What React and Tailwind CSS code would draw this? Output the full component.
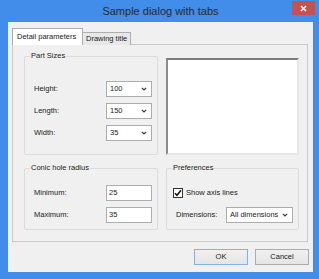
import { useState } from 'react'

function Chevron() {
  return (
    <svg width="6" height="4" viewBox="0 0 6 4" className="shrink-0">
      <path d="M0.8 0.8 L3 3 L5.2 0.8" fill="none" stroke="#3a3a3a" strokeWidth="1.2" />
    </svg>
  )
}

function Combo({ value, className }) {
  return (
    <div className={`flex h-[16px] items-center justify-between border border-[#acacac] bg-white pl-[3px] pr-[4px] ${className}`}>
      <span>{value}</span>
      <Chevron />
    </div>
  )
}

function Group({ title, className, children }) {
  return (
    <div className={`relative rounded-[2px] border border-[#dcdcdc] ${className}`}>
      <span className="absolute left-[5px] top-[-6px] bg-[#f0f0f0] px-[1px] leading-[10px]">{title}</span>
      {children}
    </div>
  )
}

function Row({ label, children }) {
  return (
    <div className="flex h-[16px] items-center justify-between">
      <span>{label}</span>
      {children}
    </div>
  )
}

export default function App() {
  const [showAxis, setShowAxis] = useState(true)

  return (
    <div className="flex h-[279px] w-[319px] flex-col bg-[#428cea] pb-[7px] pl-[8px] pr-[6px] font-['Liberation_Sans',Arial,sans-serif] text-[7.5px] text-[#1a1a1a]">
      {/* Title bar */}
      <div className="relative flex h-[22px] shrink-0 items-center justify-center">
        <span className="text-[11px] text-[#2a2a2a]">Sample dialog with tabs</span>
        <div className="absolute right-[-2px] top-[1px] flex h-[14px] w-[23px] items-center justify-center bg-[#c75050]">
          <svg width="7" height="7" viewBox="0 0 7 7">
            <path d="M1 1 L6 6 M6 1 L1 6" stroke="white" strokeWidth="1.6" />
          </svg>
        </div>
      </div>

      {/* Client area */}
      <div className="flex h-[250px] flex-col bg-[#f0f0f0] pl-[4px] pr-[4px] pt-[6px]">
        {/* Tabs */}
        <div className="relative z-10 -mb-px flex items-end">
          <div className="flex h-[17px] w-[71px] items-center border border-b-0 border-[#adadad] bg-white pl-[4px]">
            Detail parameters
          </div>
          <div className="flex h-[13px] w-[48px] items-center border border-b-0 border-l-0 border-[#adadad] bg-[#e8e8e8] pl-[3px]">
            Drawing title
          </div>
        </div>

        {/* Panel */}
        <div className="mr-px flex h-[198px] flex-col border border-[#c9c9c9] bg-[#f0f0f0] pl-[11px] pr-[8px] pt-[11px]">
          <div className="flex gap-[8px]">
            <Group title="Part Sizes" className="h-[99px] w-[134px]">
              <div className="flex flex-col gap-[6px] pl-[9px] pr-[5px] pt-[24px]">
                <Row label="Height:">
                  <Combo value="100" className="w-[46px]" />
                </Row>
                <Row label="Length:">
                  <Combo value="150" className="w-[46px]" />
                </Row>
                <Row label="Width:">
                  <Combo value="35" className="w-[46px]" />
                </Row>
              </div>
            </Group>
            <div className="mt-[2px] h-[97px] w-[133px] border-2 border-b-[#e6e6e6] border-l-[#8c8c8c] border-r-[#e6e6e6] border-t-[#7c7c7c] bg-white" />
          </div>

          <div className="mt-[13px] flex gap-[8px]">
            <Group title="Conic hole radius" className="h-[62px] w-[134px]">
              <div className="flex flex-col gap-[6px] pl-[9px] pr-[5px] pt-[16px]">
                <Row label="Minimum:">
                  <div className="flex h-[16px] w-[46px] items-center border border-[#abadb3] bg-white pl-[2px]">25</div>
                </Row>
                <Row label="Maximum:">
                  <div className="flex h-[16px] w-[46px] items-center border border-[#abadb3] bg-white pl-[2px]">35</div>
                </Row>
              </div>
            </Group>
            <Group title="Preferences" className="h-[62px] w-[133px]">
              <div className="flex flex-col gap-[6px] pr-[5px] pt-[16px]">
                <button
                  className="flex h-[16px] items-center gap-[3px] pl-[6px]"
                  onClick={() => setShowAxis(!showAxis)}
                >
                  <span className="flex h-[10px] w-[10px] items-center justify-center border border-[#333] bg-white">
                    {showAxis && (
                      <svg width="8" height="8" viewBox="0 0 8 8">
                        <path d="M1 4.2 L3 6.3 L7 1.3" fill="none" stroke="#111" strokeWidth="1.5" />
                      </svg>
                    )}
                  </span>
                  <span>Show axis lines</span>
                </button>
                <div className="flex h-[16px] items-center justify-between pl-[9px]">
                  <span>Dimensions:</span>
                  <Combo value="All dimensions" className="w-[67px]" />
                </div>
              </div>
            </Group>
          </div>
        </div>

        {/* Buttons */}
        <div className="mt-[7px] flex justify-end gap-[7px]">
          <button className="h-[16px] w-[54px] border border-[#7eb4ea] bg-gradient-to-b from-[#f0f0f0] to-[#e5e5e5]">
            OK
          </button>
          <button className="h-[16px] w-[54px] border border-[#acacac] bg-gradient-to-b from-[#f0f0f0] to-[#e5e5e5]">
            Cancel
          </button>
        </div>
      </div>
    </div>
  )
}
